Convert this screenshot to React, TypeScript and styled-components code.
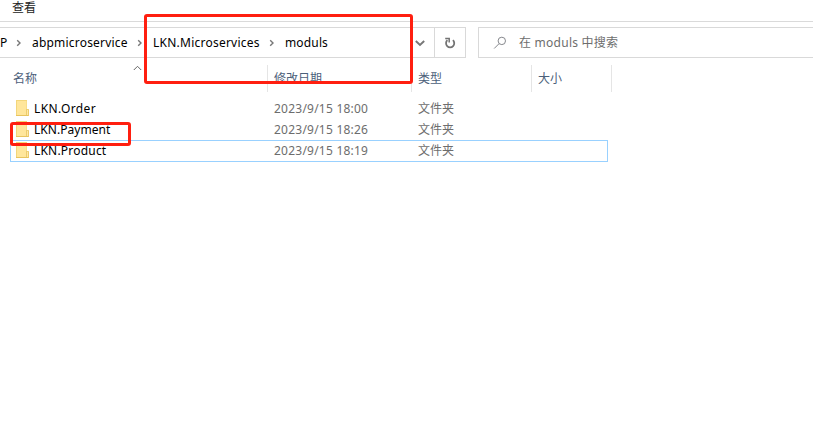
import React from 'react';
import styled, { createGlobalStyle } from 'styled-components';

const GlobalStyle = createGlobalStyle`
  * { box-sizing: border-box; }
  body {
    margin: 0;
    background: #fff;
    overflow: hidden;
    font-family: "Noto Sans", "Noto Sans CJK SC", sans-serif;
    font-size: 12px;
    line-height: 20px;
    color: #000;
  }
`;

const Explorer = styled.div`
  position: relative;
  width: 813px;
  height: 432px;
  display: flex;
  flex-direction: column;
  overflow: hidden;
  background: #fff;
  white-space: nowrap;
`;

const Ribbon = styled.div`
  height: 22px;
  flex: none;
  padding: 0 0 0 12px;
  line-height: 16px;
  color: #222;
  border-bottom: 1px solid #dadada;
`;

const NavBar = styled.div`
  display: flex;
  flex: none;
  height: 31px;
  margin-top: 5px;
`;

const AddressBar = styled.div`
  display: flex;
  width: 466px;
  border: 1px solid #d9d9d9;
  border-left: 0;
`;

const Crumbs = styled.div`
  display: flex;
  align-items: center;
  flex: 1;
`;

const Label = styled.span<{ $w?: number; $spacing?: number }>`
  display: block;
  flex: none;
  width: ${(p) => (p.$w ? `${p.$w}px` : 'auto')};
  letter-spacing: ${(p) => p.$spacing ?? 0}px;
`;

const CrumbArrow = styled.span<{ $w: number }>`
  display: flex;
  flex: none;
  justify-content: center;
  width: ${(p) => p.$w}px;
  padding-right: 2px;
`;

const BarButton = styled.div<{ $w: number; $divided?: boolean }>`
  display: flex;
  flex: none;
  align-items: center;
  justify-content: center;
  width: ${(p) => p.$w}px;
  border-left: ${(p) => (p.$divided ? '1px solid #d9d9d9' : '0')};
`;

const SearchBox = styled.div`
  display: flex;
  align-items: center;
  gap: 12px;
  flex: 1;
  margin-left: 12px;
  padding-left: 14px;
  border: 1px solid #d9d9d9;
  border-right: 0;
  color: #6d6d6d;
`;

const HeaderRow = styled.div`
  display: grid;
  grid-template-columns: 268px 144px 120px 80px;
  flex: none;
  height: 27px;
  margin-top: 7px;
  color: #4c607a;
`;

const HeaderCell = styled.div<{ $first?: boolean }>`
  display: flex;
  align-items: center;
  padding-left: ${(p) => (p.$first ? 13 : 6)}px;
  border-right: 1px solid #e5e5e5;
`;

const SortMark = styled.span`
  display: flex;
  height: 27px;
  margin-left: 96px;
`;

const FileList = styled.div`
  display: flex;
  flex-direction: column;
  margin: 6px 0 0 10px;
  width: 598px;
`;

const FileRow = styled.div<{ $focused?: boolean }>`
  display: grid;
  grid-template-columns: 18px 240px 144px 1fr;
  align-items: center;
  height: ${(p) => (p.$focused ? 22 : 21)}px;
  padding: 0 5px;
  border: 1px solid ${(p) => (p.$focused ? '#99d1ff' : 'transparent')};
`;

const Detail = styled(Label)`
  color: #6d6d6d;
`;

const FolderIcon = styled.svg`
  display: block;
  align-self: start;
  margin-top: 1px;
`;

const Highlight = styled.div<{ $x: number; $y: number; $w: number; $h: number }>`
  position: absolute;
  left: ${(p) => p.$x}px;
  top: ${(p) => p.$y}px;
  width: ${(p) => p.$w}px;
  height: ${(p) => p.$h}px;
  border: 3px solid #ff1f10;
  border-radius: 3px;
`;

const Chevron = () => (
  <svg width="6" height="8" viewBox="0 0 6 8" fill="none" stroke="#777" strokeWidth="1.4">
    <path d="M1.2 1.2 4 4 1.2 6.8" />
  </svg>
);

const DownArrow = () => (
  <svg width="10" height="8" viewBox="0 0 10 8" fill="none" stroke="#777" strokeWidth="1.9">
    <path d="M.8 2 5 6 9.2 2" />
  </svg>
);

const Refresh = () => (
  <svg width="12" height="12" viewBox="0 0 12 12" fill="none" stroke="#737373" strokeWidth="1.8">
    <path d="M8.9 3.2A4.1 4.1 0 1 1 3.4 3.2" />
    <path d="M1.2 1.4H5.2V5.4" strokeWidth="1.5" />
  </svg>
);

const Magnifier = () => (
  <svg width="14" height="14" viewBox="0 0 14 14" fill="none" stroke="#85878c" strokeWidth="1">
    <circle cx="8.8" cy="4.9" r="3.7" />
    <path d="M6 7.7 1.2 12.5" />
  </svg>
);

const SortUp = () => (
  <svg width="9" height="6" viewBox="0 0 9 6" fill="none" stroke="#666" strokeWidth="1">
    <path d="M.8 5 4.5 1.3 8.2 5" />
  </svg>
);

const Folder = () => (
  <FolderIcon width="13" height="16" viewBox="0 0 13 16">
    <path d="M0 0H11V9.5H13V16H0Z" fill="#f3d67b" />
    <path d="M1 1H10.5V15H1Z" fill="#ffe69b" />
    <path d="M10.5 9.5H12.5V15.5H10.5Z" fill="#ffe9a6" stroke="#e2bc51" strokeWidth=".6" />
    <path d="M0 15.5H12" stroke="#e8c45e" />
  </FolderIcon>
);

const files = [
  { name: 'LKN.Order', date: '2023/9/15 18:00', spacing: 0.38 },
  { name: 'LKN.Payment', date: '2023/9/15 18:26', spacing: 0.05 },
  { name: 'LKN.Product', date: '2023/9/15 18:19', spacing: 0.2, focused: true },
];

export default function App() {
  return (
    <>
      <GlobalStyle />
      <Explorer>
        <Ribbon>查看</Ribbon>
        <NavBar>
          <AddressBar>
            <Crumbs>
              <Label $w={8}>P</Label>
              <CrumbArrow $w={24}><Chevron /></CrumbArrow>
              <Label $w={96} $spacing={0.2}>abpmicroservice</Label>
              <CrumbArrow $w={25}><Chevron /></CrumbArrow>
              <Label $w={107} $spacing={0.24}>LKN.Microservices</Label>
              <CrumbArrow $w={25}><Chevron /></CrumbArrow>
              <Label $spacing={0.15}>moduls</Label>
            </Crumbs>
            <BarButton $w={29}><DownArrow /></BarButton>
            <BarButton $w={31} $divided><Refresh /></BarButton>
          </AddressBar>
          <SearchBox>
            <Magnifier />
            <Label $spacing={0.25}>在 moduls 中搜索</Label>
          </SearchBox>
        </NavBar>
        <HeaderRow>
          <HeaderCell $first>
            <Label $w={24}>名称</Label>
            <SortMark><SortUp /></SortMark>
          </HeaderCell>
          <HeaderCell>修改日期</HeaderCell>
          <HeaderCell>类型</HeaderCell>
          <HeaderCell>大小</HeaderCell>
        </HeaderRow>
        <FileList>
          {files.map((f) => (
            <FileRow key={f.name} $focused={f.focused}>
              <Folder />
              <Label $spacing={f.spacing}>{f.name}</Label>
              <Detail $spacing={0.23}>{f.date}</Detail>
              <Detail>文件夹</Detail>
            </FileRow>
          ))}
        </FileList>
        <Highlight $x={144} $y={14} $w={269} $h={70} />
        <Highlight $x={10} $y={122} $w={121} $h={24} />
      </Explorer>
    </>
  );
}
